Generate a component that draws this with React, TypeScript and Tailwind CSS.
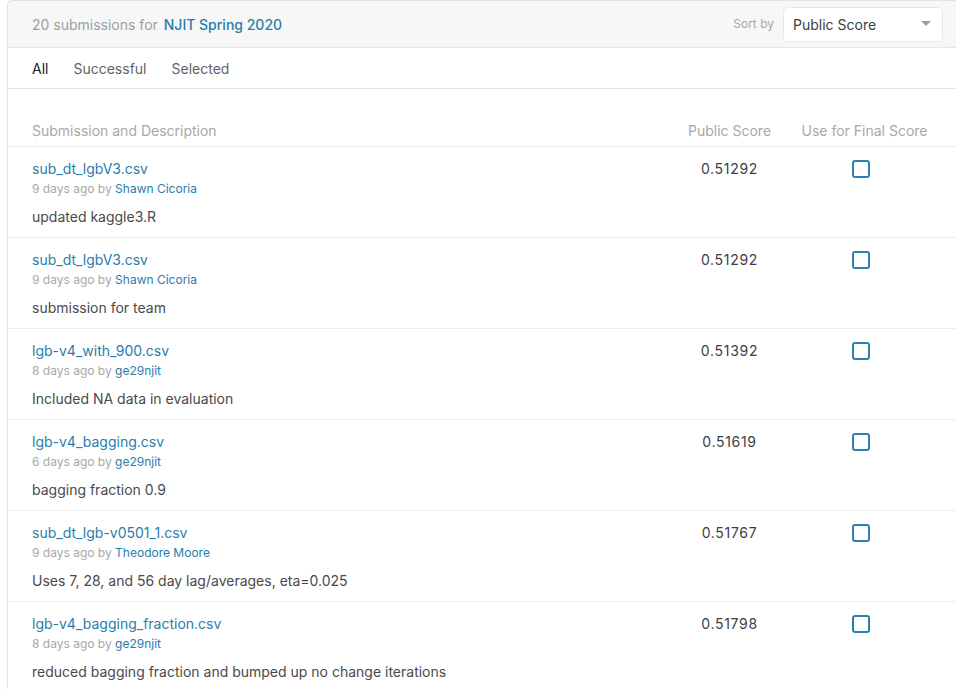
import React from "react";

const rows = [
  { name: "sub_dt_lgbV3.csv", ago: "9 days ago", by: "Shawn Cicoria", desc: "updated kaggle3.R", score: "0.51292" },
  { name: "sub_dt_lgbV3.csv", ago: "9 days ago", by: "Shawn Cicoria", desc: "submission for team", score: "0.51292" },
  { name: "lgb-v4_with_900.csv", ago: "8 days ago", by: "ge29njit", desc: "Included NA data in evaluation", score: "0.51392" },
  { name: "lgb-v4_bagging.csv", ago: "6 days ago", by: "ge29njit", desc: "bagging fraction 0.9", score: "0.51619" },
  { name: "sub_dt_lgb-v0501_1.csv", ago: "9 days ago", by: "Theodore Moore", desc: "Uses 7, 28, and 56 day lag/averages, eta=0.025", score: "0.51767" },
  { name: "lgb-v4_bagging_fraction.csv", ago: "8 days ago", by: "ge29njit", desc: "reduced bagging fraction and bumped up no change iterations", score: "0.51798" },
];

export default function App() {
  return (
    <div className="w-[956px] h-[689px] overflow-hidden bg-white pl-[7px]" style={{ fontFamily: "Inter, 'Noto Sans', sans-serif" }}>
      <div className="w-[960px] min-h-[700px] border-l border-t border-[#e3e3e3] rounded-tl-[5px] bg-white">
        {/* Header */}
        <div className="h-[47px] bg-[#f7f7f7] border-b border-[#e6e6e6] flex items-center pl-[24px] pr-[24px] rounded-tl-[5px]">
          <div className="text-[14px] text-[#9aa0a6]">
            20 submissions for <span className="text-[#2a7dab] font-medium ml-[2px]">NJIT Spring 2020</span>
          </div>
          <div className="ml-auto flex items-center">
            <span className="text-[12px] text-[#a8a8a8] mr-[9px]">Sort by</span>
            <div className="w-[160px] h-[35px] bg-white border border-[#e8e8e8] rounded-[4px] flex items-center pl-[9px] pr-[11px]">
              <span className="text-[14px] text-[#3c4043]">Public Score</span>
              <svg className="ml-auto" width="10" height="6" viewBox="0 0 10 6"><path d="M0 0 L10 0 L5 5 Z" fill="#9aa0a6" /></svg>
            </div>
          </div>
        </div>
        {/* Tabs */}
        <div className="h-[41px] border-b border-[#e3e3e3] flex items-center pl-[24px] gap-[25px] text-[14px]">
          <span className="text-[#202124]">All</span>
          <span className="text-[#5f6368]">Successful</span>
          <span className="text-[#5f6368]">Selected</span>
        </div>
        {/* Table header */}
        <div className="h-[58px] border-b border-[#ececec] flex items-end pb-[5px] pl-[24px] text-[14px] text-[#a8a8a8]">
          <div className="w-[643px]">Submission and Description</div>
          <div className="w-[109px] text-center">Public Score</div>
          <div className="w-[141px] ml-[10px] text-center">Use for Final Score</div>
        </div>
        {rows.map((r, i) => (
          <div key={i} className="h-[91px] border-b border-[#ececec] flex pl-[24px] pt-[12px]">
            <div className="w-[643px] flex flex-col">
              <div className="text-[14px] leading-[20px] text-[#2a7dab]">{r.name}</div>
              <div className="text-[12px] leading-[16px] mt-[2px] text-[#a8a8a8]">
                {r.ago} by <span className="text-[#2a7dab]">{r.by}</span>
              </div>
              <div className="text-[14px] leading-[20px] mt-[10px] text-[#4a4a4a]">{r.desc}</div>
            </div>
            <div className="w-[109px] text-center text-[14px] leading-[20px] text-[#3c4043] tracking-[0.7px]">{r.score}</div>
            <div className="w-[141px] ml-[10px] flex justify-center pt-[1px]">
              <div className="w-[18px] h-[18px] mr-[7px] border-2 border-[#2d82ad] rounded-[3px]" />
            </div>
          </div>
        ))}
      </div>
    </div>
  );
}
